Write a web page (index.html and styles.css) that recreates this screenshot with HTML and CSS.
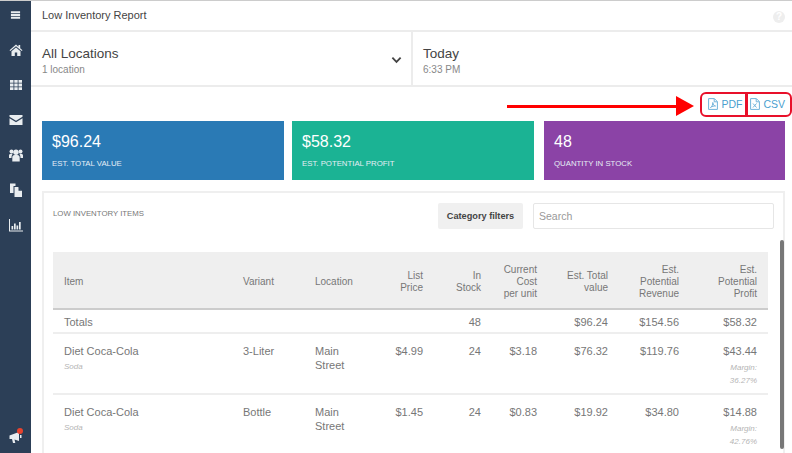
FILE: index.html
```html
<!DOCTYPE html>
<html>
<head>
  <meta charset="utf-8">
  <meta name="viewport" content="width=device-width, initial-scale=1">
  <title>Low Inventory Report</title>
  <link rel="stylesheet" href="styles.css">
</head>
<body>
  <div class="app">
    <!-- Barra lateral -->
    <nav class="sidebar">
      <svg class="nav-icon menu" viewBox="0 0 12 12"><path d="M1 2h10v2H1zM1 5h10v2H1zM1 8h10v2H1z"/></svg>
      <svg class="nav-icon" viewBox="0 0 14 14"><path d="M7 1.500 .5 7.200l.8.900L7 3.200l5.700 4.900.8-.9-2.300-2V2h-1.700v1.700zM2.500 8.300V13h3.300V9.500h2.400V13h3.300V8.300L7 4.400z"/></svg>
      <svg class="nav-icon" viewBox="0 0 14 14"><path d="M1 2h3.500v2.800H1zM5.300 2h3.400v2.800H5.300zM9.500 2H13v2.800H9.500zM1 5.600h3.500v2.800H1zM5.300 5.600h3.400v2.800H5.300zM9.500 5.600H13v2.800H9.500zM1 9.200h3.500V12H1zM5.300 9.200h3.400V12H5.300zM9.500 9.200H13V12H9.500z"/></svg>
      <svg class="nav-icon" viewBox="0 0 14 14"><path d="M.5 2h13v1.800L7 7.800.5 3.800zM.5 5.200 7 9.200l6.500-4V12H.5z"/></svg>
      <svg class="nav-icon" viewBox="0 0 14 14"><circle cx="7" cy="4.200" r="2.700"/><circle cx="2.500" cy="3.500" r="2"/><circle cx="11.500" cy="3.500" r="2"/><path d="M3.300 13.500V9.500c0-1.800 1.200-2.500 2.400-2.500h2.600c1.200 0 2.400.7 2.400 2.500v4zM0 10V7.500c0-1 .8-1.700 1.800-1.700h2C3 6.700 2.500 8 2.500 10zM14 10V7.500c0-1-.8-1.700-1.800-1.700h-2c.8.900 1.300 2.200 1.300 4.200z"/></svg>
      <svg class="nav-icon" viewBox="0 0 14 14"><path d="M1 .5h5.500V3H4.500v7H1zM5.500 4H9l4 4v6H5.500zM9.500 4.500v3.200h3.200z"/></svg>
      <svg class="nav-icon" viewBox="0 0 14 14"><path d="M0 1h1v11.500h14v1H0zM2.500 8h1.700v3.500H2.500zM5 5.500h1.700v6H5zM7.500 7.500h1.700v4H7.500zM10 4h1.700v7.500H10z"/></svg>
      <div class="nav-bottom">
        <svg class="nav-icon" viewBox="0 0 14 14"><path d="M.5 5.500 10 2v9L5.500 9.500l.8 3.500H4L3 9H.5zM11 5h1.500v3H11z"/></svg>
        <span class="nav-dot"></span>
      </div>
    </nav>

    <main class="content">
      <header class="titlebar">
        <span>Low Inventory Report</span>
        <span class="help">?</span>
      </header>

      <section class="filters">
        <div class="filter filter-loc">
          <div>
            <div class="filter-main">All Locations</div>
            <div class="filter-sub">1 location</div>
          </div>
          <svg class="chevron" viewBox="0 0 12 8"><path d="M1.500 1.500 6 6l4.500-4.500" /></svg>
        </div>
        <div class="filter filter-date">
          <div>
            <div class="filter-main">Today</div>
            <div class="filter-sub">6:33 PM</div>
          </div>
        </div>
      </section>

      <div class="export-row">
        <a class="export">
          <svg viewBox="0 0 10 12"><path d="M.6.600h5.800l3 3v7.800H.6zM6.200.800v3h3M2.500 9.500c1.500-1 2.500-3 2.300-5 .3 2 1 3 2.700 3.500-1.500-.2-3.500.2-5 1.500z"/></svg>PDF
        </a>
        <a class="export">
          <svg viewBox="0 0 10 12"><path d="M.6.600h5.800l3 3v7.800H.6zM6.200.800v3h3M3 5.500l3.500 4M6.500 5.500 3 9.500"/></svg>CSV
        </a>
      </div>

      <section class="cards">
        <div class="card card-blue">
          <div class="card-value">$96.24</div>
          <div class="card-label">EST. TOTAL VALUE</div>
        </div>
        <div class="card card-green">
          <div class="card-value">$58.32</div>
          <div class="card-label">EST. POTENTIAL PROFIT</div>
        </div>
        <div class="card card-purple">
          <div class="card-value">48</div>
          <div class="card-label">QUANTITY IN STOCK</div>
        </div>
      </section>

      <section class="panel">
        <div class="panel-head">
          <div class="panel-title">LOW INVENTORY ITEMS</div>
          <button class="btn-filter">Category filters</button>
          <input class="search" type="text" placeholder="Search">
        </div>
        <table class="items">
          <thead>
            <tr>
              <th class="col-item">Item</th>
              <th class="col-variant">Variant</th>
              <th class="col-location">Location</th>
              <th class="num col-list">List<br>Price</th>
              <th class="num col-stock">In<br>Stock</th>
              <th class="num col-cost">Current<br>Cost<br>per unit</th>
              <th class="num col-total">Est. Total<br>value</th>
              <th class="num col-rev">Est.<br>Potential<br>Revenue</th>
              <th class="num col-profit">Est.<br>Potential<br>Profit</th>
            </tr>
          </thead>
          <tbody>
            <tr class="totals">
              <td>Totals</td><td></td><td></td><td></td>
              <td class="num">48</td><td></td>
              <td class="num">$96.24</td><td class="num">$154.56</td><td class="num">$58.32</td>
            </tr>
            <tr class="item-row">
              <td>Diet Coca-Cola<small>Soda</small></td>
              <td>3-Liter</td><td>Main<br>Street</td>
              <td class="num">$4.99</td><td class="num">24</td><td class="num">$3.18</td>
              <td class="num">$76.32</td><td class="num">$119.76</td>
              <td class="num">$43.44<small>Margin:<br>36.27%</small></td>
            </tr>
            <tr class="item-row last">
              <td>Diet Coca-Cola<small>Soda</small></td>
              <td>Bottle</td><td>Main<br>Street</td>
              <td class="num">$1.45</td><td class="num">24</td><td class="num">$0.83</td>
              <td class="num">$19.92</td><td class="num">$34.80</td>
              <td class="num">$14.88<small>Margin:<br>42.76%</small></td>
            </tr>
          </tbody>
        </table>
        <div class="scrollbar"></div>
      </section>

      <!-- Anotaciones en rojo sobre la captura -->
      <div class="arrow-line"></div>
      <div class="arrow-head"></div>
      <div class="mark mark-pdf"></div>
      <div class="mark mark-csv"></div>
    </main>
  </div>
</body>
</html>
```

FILE: styles.css
```css
* {
  box-sizing: border-box;
}

html, body {
  height: 100%;
  margin: 0;
  overflow: hidden;
}

body {
  font-family: "Liberation Sans", Arial, sans-serif;
  font-size: 12px;
  color: #777;
  background: #fff;
}

.app {
  display: flex;
  height: 453px;
  border-top: 1px solid #ccc;
}

.sidebar {
  width: 31px;
  flex: none;
  background: #2c3f57;
  display: flex;
  flex-direction: column;
  align-items: center;
  padding-top: 8px;
}

.nav-icon {
  width: 14px;
  height: 14px;
  fill: #e9edf0;
  margin-bottom: 21px;
}

.nav-icon.menu {
  width: 11px;
  height: 12px;
  margin-bottom: 22px;
}

.nav-bottom {
  margin-top: auto;
  position: relative;
  height: 23px;
}

.nav-dot {
  position: absolute;
  top: -2px;
  right: 0;
  width: 6px;
  height: 6px;
  border-radius: 50%;
  background: #e8432e;
}

.content {
  flex: 1;
  position: relative;
  min-width: 0;
}

.titlebar {
  height: 31px;
  padding: 0 9px 2px 11px;
  display: flex;
  align-items: center;
  justify-content: space-between;
  font-size: 11px;
  color: #444;
  border-bottom: 2px solid #ececec;
}

.help {
  width: 12px;
  height: 12px;
  border-radius: 50%;
  background: #eee;
  color: #fff;
  font-size: 10px;
  font-weight: bold;
  text-align: center;
  line-height: 12px;
  margin: 5px -2px 0 0;
}

.filters {
  display: flex;
  height: 55px;
  border-bottom: 2px solid #ececec;
}

.filter {
  display: flex;
  align-items: center;
  justify-content: space-between;
  padding: 5px 9px 0 11px;
  flex: 1;
}

.filter-loc {
  flex: none;
  width: 382px;
  border-right: 2px solid #ececec;
}

.filter-date {
  padding-left: 10px;
}

.filter-main {
  font-size: 13.5px;
  line-height: 18px;
  color: #444;
}

.filter-sub {
  font-size: 10px;
  line-height: 14px;
  color: #888;
}

.chevron {
  width: 11px;
  height: 8px;
  margin-top: -2px;
  fill: none;
  stroke: #444;
  stroke-width: 2;
}

.export-row {
  height: 34px;
  display: flex;
  justify-content: flex-end;
  align-items: center;
  gap: 4px;
  padding-right: 5px;
}

.export {
  display: flex;
  align-items: center;
  gap: 3px;
  font-size: 10.5px;
  color: #4a9fd0;
  padding: 0 2px;
}

.export svg {
  width: 10px;
  height: 12px;
  fill: none;
  stroke: #6fb3da;
  stroke-width: 1;
}

.cards {
  display: flex;
  gap: 8px;
  padding: 0 7px 0 11px;
}

.card {
  flex: 0 0 242px;
  height: 59px;
  padding: 11px 10px 0;
  color: #fff;
}

.card-blue { background: #2a7ab5; }
.card-green { background: #1bb394; }
.card-purple { background: #8b43a6; flex-basis: 241px; margin-left: 2px; }

.card-value {
  font-size: 16px;
  line-height: 20px;
}

.card-label {
  font-size: 7.8px;
  line-height: 12px;
  margin-top: 6px;
  color: #e6eef5;
}

.panel {
  position: relative;
  margin: 11px 7px 0 11px;
  height: 262px;
  padding: 0 9px 0 9px;
  border: 2px solid #efefef;
  border-bottom: 0;
}

.panel-head {
  display: flex;
  align-items: center;
  height: 59px;
  padding: 10px 0 23px;
}

.panel-title {
  flex: 1;
  font-size: 7.8px;
  color: #777;
  margin-bottom: 6px;
}

.btn-filter {
  width: 85px;
  height: 26px;
  margin-right: 10px;
  padding: 0;
  border: 0;
  border-radius: 2px;
  background: #f0f0f0;
  font-family: inherit;
  font-size: 9.2px;
  font-weight: bold;
  white-space: nowrap;
  color: #444;
}

.search {
  width: 241px;
  height: 26px;
  padding: 0 5px;
  border: 1px solid #e6e6e6;
  border-radius: 2px;
  font-family: inherit;
  font-size: 10.5px;
  outline: none;
}

.search::placeholder {
  color: #999;
}

.items {
  width: 715px;
  border-collapse: collapse;
  table-layout: fixed;
  font-size: 11px;
}

.items th {
  height: 57px;
  padding: 4px 11px 0;
  background: #efefef;
  border-bottom: 2px solid #ccc;
  font-weight: normal;
  font-size: 10px;
  line-height: 12px;
  text-align: left;
}

.items th.num,
.items td.num {
  text-align: right;
}

.items td {
  padding: 5px 11px 0;
  vertical-align: top;
  line-height: 14px;
}

.totals td {
  height: 24px;
  border-bottom: 2px solid #eee;
}

.item-row td {
  height: 61px;
  border-bottom: 2px solid #eee;
  padding-top: 10px;
}

.item-row.last td {
  height: 57px;
  border-bottom: 0;
}

.items small {
  display: block;
  font-size: 8px;
  font-style: italic;
  line-height: 13px;
  color: #b5b5b5;
  margin-top: 2px;
}

.items .num small {
  margin-top: 3px;
}

.col-item { width: 179px; }
.col-variant { width: 72px; }
.col-location { width: 66px; }
.col-list { width: 64px; }
.col-stock { width: 58px; }
.col-cost { width: 56px; }
.col-total { width: 71px; }
.col-rev { width: 71px; }
.col-profit { width: 78px; }

.scrollbar {
  position: absolute;
  top: 47px;
  right: -1px;
  width: 4px;
  height: 209px;
  border-radius: 2px;
  background: #777;
}

.arrow-line {
  position: absolute;
  left: 476px;
  top: 104px;
  width: 170px;
  height: 3px;
  background: #f00;
}

.arrow-head {
  position: absolute;
  left: 645px;
  top: 95px;
  border-left: 18px solid #f00;
  border-top: 10px solid transparent;
  border-bottom: 10px solid transparent;
}

.mark {
  position: absolute;
  top: 91px;
  height: 25px;
  border: 2px solid #e8102a;
}

.mark-pdf {
  left: 669px;
  width: 47px;
  border-radius: 6px 0 0 6px;
}

.mark-csv {
  left: 715px;
  width: 46px;
  border-radius: 0 6px 6px 0;
}
```
